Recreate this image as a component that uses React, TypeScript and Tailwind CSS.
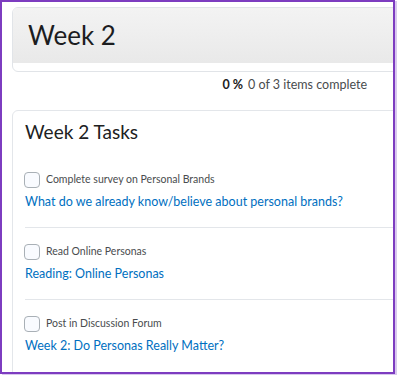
import React from "react";

const items = [
  { label: "Complete survey on Personal Brands", link: "What do we already know/believe about personal brands?" },
  { label: "Read Online Personas", link: "Reading: Online Personas" },
  { label: "Post in Discussion Forum", link: "Week 2: Do Personas Really Matter?" },
];

export default function App() {
  return (
    <div className="w-[397px] h-[375px] bg-white overflow-hidden" style={{ fontFamily: "Lato, 'Noto Sans', sans-serif" }}>
      <div className="w-[395px] h-[374px] border-2 border-[#7d3cc0] shadow-[2px_1px_0_#d8c8ee] overflow-hidden bg-white">
        <div className="w-[420px] pl-[10px] pt-[5px]">
          <div className="h-[65px] rounded-md border border-[#e1e4e8] bg-white overflow-hidden flex flex-col">
            <div className="h-[55px] bg-gradient-to-b from-[#f3f3f3] to-[#e9e9e9] flex items-center pl-[15px]">
              <h1 className="text-[26px] leading-none text-[#1c1d1f] font-normal pb-[2px]">Week 2</h1>
            </div>
          </div>
        </div>
        <div className="w-[365px] flex justify-end pt-[3px] h-[24px] items-center text-[12.5px] text-[#494c4e]">
          <span className="font-bold text-[#202122]">0 %</span>
          <span className="ml-[5px]">0 of 3 items complete</span>
        </div>
        <div className="w-[420px] pl-[10px] pt-[14px]">
          <div className="rounded-md border border-[#e3e6ea] h-[300px] pl-[12px]">
            <h2 className="text-[19px] leading-none text-[#202122] font-normal pt-[11px]">Week 2 Tasks</h2>
            <div className="pt-[31px]">
              {items.map((it, i) => (
                <div key={i} className={i === 0 ? "" : "border-t border-[#e3e6ea] pt-[16px]"}>
                  <div className="flex items-center h-[16px]">
                    <div className="w-[16px] h-[16px] rounded-[4px] border border-[#a9b0b6] bg-[#f9fbff] ml-[-1px]" />
                    <span className="ml-[6px] text-[10.5px] text-[#494c4e]">{it.label}</span>
                  </div>
                  <div className="pt-[4px] pb-[15px] text-[12.5px] text-[#006fbf] leading-[20px]">{it.link}</div>
                </div>
              ))}
            </div>
          </div>
        </div>
      </div>
    </div>
  );
}
